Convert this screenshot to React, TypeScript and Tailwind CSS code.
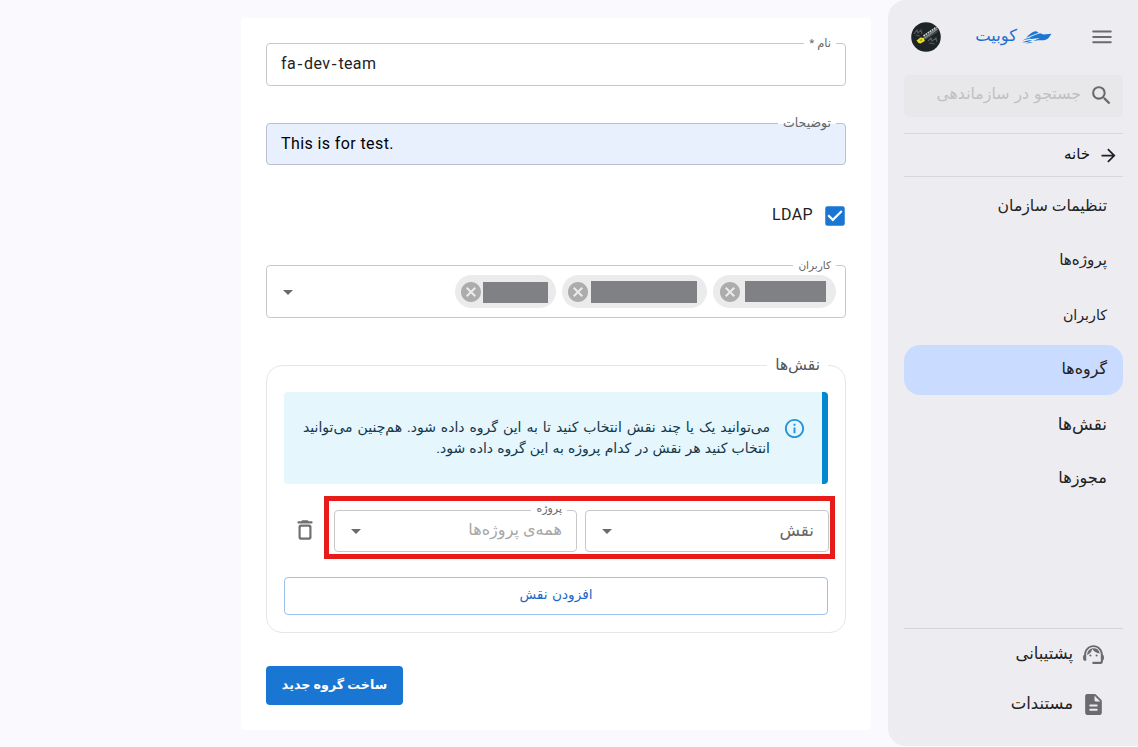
import type { ReactNode } from "react";
import {
  MdArrowDropDown,
  MdArrowForward,
  MdCancel,
  MdCheckBox,
  MdOutlineInfo,
  MdSearch,
  MdSupportAgent,
} from "react-icons/md";

const navItems = [
  { label: "تنظیمات سازمان", size: "text-[15.7px]" },
  { label: "پروژه‌ها", size: "text-[15.2px]" },
  { label: "کاربران", size: "text-[14.2px]" },
  { label: "گروه‌ها", size: "text-[15.9px]", active: true },
  { label: "نقش‌ها", size: "text-[17px]" },
  { label: "مجوزها", size: "text-[16.2px]" },
];

const chips = [
  { chip: "w-[123px] pr-[10px]", bar: "w-[81px] h-[21px]", gap: "gap-[3px]" },
  { chip: "w-[145px] pr-[10px]", bar: "w-[106px] h-[22px]", gap: "gap-px" },
  { chip: "w-[101px] pr-[8px]", bar: "w-[65px] h-[21px] mt-0.5", gap: "gap-0" },
];

function Logo() {
  return (
    <svg viewBox="0 0 30 14" className="h-[14px] w-[30px] fill-[#1976d2]">
      <path d="M4.300 7.800C6 5.500 8 3.700 10.500 2.200 12.500 1 14.500.9 15.700 1.900L16.500 2.700 10 5.200z" />
      <path d="M7.300 7.600 13 5l5-1.700 3.500 1.100 8-.6-3 4.200c-1.500 1.700-3.700 2.300-6.500 2.300-3.500-.1-5.500 0-9.500 1l7.500-3.400L9 9z" />
      <path d="M.5 10.800C2.200 9 4.500 8.300 7.300 7.900l1.500.9C5.500 9 3 9.700.5 10.800z" />
      <path d="M.3 12.500c3-1.700 6-2.500 10-2.600-2.500 1.600-5 2.400-10 2.600z" />
      <path d="M3.500 13.300c2.500-.9 4.500-1.400 7.500-1.400-2.300 1-4.500 1.500-7.500 1.400z" />
    </svg>
  );
}

function Avatar() {
  return (
    <svg viewBox="0 0 30 30" className="size-[30px]">
      <defs>
        <clipPath id="avatar-clip">
          <circle cx="15" cy="15" r="14.800" />
        </clipPath>
      </defs>
      <g clipPath="url(#avatar-clip)">
        <rect width="30" height="30" fill="#1d2427" />
        <path d="m12.500 15.500 13-9.500 1.500 1.800L14 17z" fill="#7b8082" />
        <path d="m12.500 14 13-8.800" stroke="#d3d5d6" strokeWidth="1.600" strokeDasharray="1.800 .7" />
        <path d="m14.500 17 12-7.500" stroke="#585e61" strokeWidth=".9" />
        <path d="m5.500 18.500 4-3 3.500.5.800 3-4.300 2.500-2-.5z" fill="#e6dd20" />
        <path d="m8.500 18.500 2-1.300.5 1.300z" fill="#625f1c" />
        <path
          d="m3 12 3-4 1 3 3-3 1 4M5 13l4 1M17 19l3-3 1 3 4-3 1 4M18 21l6 1"
          fill="none"
          stroke="#5c5655"
          strokeWidth="1.100"
        />
      </g>
    </svg>
  );
}

function MenuIcon() {
  return (
    <svg viewBox="0 0 24 24" className="size-6 text-[#6b6b6e]">
      <path
        d="M3.200 6.500h17.600M3.200 12h17.600M3.200 17.300h17.600"
        stroke="currentColor"
        strokeWidth="1.900"
        strokeLinecap="round"
      />
    </svg>
  );
}

function DocumentIcon() {
  return (
    <svg viewBox="0 0 24 24" className="size-[25px] fill-[#6b6b6e]">
      <path d="M14.590 2.590c-.38-.38-.89-.59-1.420-.59H6c-1.100 0-2 .9-2 2v16c0 1.100.89 2 1.990 2H18c1.100 0 2-.9 2-2V8.830c0-.53-.21-1.040-.59-1.410l-4.820-4.830zM15 18H9c-.55 0-1-.45-1-1s.45-1 1-1h6c.55 0 1 .45 1 1s-.45 1-1 1zm0-4H9c-.55 0-1-.45-1-1s.45-1 1-1h6c.55 0 1 .45 1 1s-.45 1-1 1zm-2-6V3.500L18.500 9H14c-.55 0-1-.45-1-1z" />
    </svg>
  );
}

function TrashIcon() {
  return (
    <svg viewBox="0 0 24 24" className="mt-1 mr-[6px] size-[26px] fill-[#707070]">
      <path d="M6 19c0 1.100.9 2 2 2h8c1.100 0 2-.9 2-2V9c0-1.100-.9-2-2-2H8c-1.100 0-2 .9-2 2v10zM9 9h6c.55 0 1 .45 1 1v8c0 .55-.45 1-1 1H9c-.55 0-1-.45-1-1v-8c0-.55.45-1 1-1zm6.500-5l-.71-.71c-.18-.18-.44-.29-.7-.29H9.910c-.26 0-.52.110-.7.290L8.500 4H6c-.55 0-1 .45-1 1s.45 1 1 1h12c.55 0 1-.45 1-1s-.45-1-1-1h-2.500z" />
    </svg>
  );
}

function OutlinedField({
  label,
  labelClass,
  className,
  children,
}: {
  label?: string;
  labelClass?: string;
  className: string;
  children: ReactNode;
}) {
  return (
    <div className={`relative flex items-center rounded-[4px] border border-[#c8c8c8] ${className}`}>
      {label && (
        <span
          className={`absolute -top-px right-[9px] flex h-px items-center bg-white px-[5px] whitespace-nowrap text-[#666] ${labelClass}`}
        >
          {label}
        </span>
      )}
      {children}
    </div>
  );
}

function Sidebar() {
  return (
    <aside className="flex h-[746px] w-[250px] shrink-0 flex-col rounded-l-[18px] bg-[#edecf1] pr-[15px] pl-4 text-[#222]">
      <header className="flex h-[75px] items-center pr-[9px] pb-0.5 pl-[7px]">
        <MenuIcon />
        <div className="mr-[38px] flex items-center gap-[5px]">
          <Logo />
          <span className="pb-0.5 text-[16.400px] leading-6 font-medium text-[#1b6fd0]">کوبیت</span>
        </div>
        <div className="mr-auto">
          <Avatar />
        </div>
      </header>

      <div className="flex h-[42px] items-center gap-[8px] rounded-[5px] bg-[#e8e8ea] pr-[9px] pb-0.5">
        <MdSearch className="size-[25px] text-[#69696b]" />
        <span className="pb-0.5 text-[15.800px] leading-6 text-[#c0c0c2] [word-spacing:1px]">جستجو در سازماندهی</span>
      </div>

      <div className="mt-4 flex h-[44px] items-center gap-[8px] border-y border-[#d8d7dc] pr-1">
        <MdArrowForward className="size-[21px] text-[#222]" />
        <span className="pb-0.5 text-[15px] leading-6 text-[#111]">خانه</span>
      </div>

      <nav className="mt-1 flex flex-col gap-[4.600px]">
        {navItems.map((item) => (
          <a
            key={item.label}
            className={`flex h-[50px] items-center rounded-2xl pr-4 pb-px leading-6 ${item.size} ${item.active ? "bg-[#c9dbff]" : ""}`}
          >
            {item.label}
          </a>
        ))}
      </nav>

      <footer className="mt-auto mb-[17px] border-t border-[#d4d3d8]">
        <a className="flex h-[50px] items-center gap-[8px] pr-[17px] text-[16.500px] leading-6">
          <MdSupportAgent className="size-[25px] text-[#6b6b6e]" />
          پشتیبانی
        </a>
        <a className="flex h-[50px] items-center gap-[8px] pr-[17px] text-[16.500px] leading-6">
          <DocumentIcon />
          مستندات
        </a>
      </footer>
    </aside>
  );
}

function RolesSection() {
  return (
    <section className="relative mt-[47px] h-[268px] rounded-2xl border border-[#e6e6e6] px-[17px] pt-[26px]">
      <h2 className="absolute -top-px right-[17px] flex h-px items-center bg-white px-2 text-[15.500px] text-[#555]">
        نقش‌ها
      </h2>

      <div className="flex h-[92px] rounded-[4px] border-r-[6px] border-[#0288d1] bg-[#e5f6fd] pt-[25px] pr-[16px]">
        <MdOutlineInfo className="size-[23px] shrink-0 text-[#2196d8]" />
        <p className="mr-[13px] text-[14px] leading-[21px] whitespace-nowrap text-[#14384c]">
          <span className="block [word-spacing:1.5px]">
            می‌توانید یک یا چند نقش انتخاب کنید تا به این گروه داده شود. هم‌چنین می‌توانید
          </span>
          <span className="block [word-spacing:0.7px]">انتخاب کنید هر نقش در کدام پروژه به این گروه داده شود.</span>
        </p>
      </div>

      <div className="mt-3 -mr-[7px] flex items-center">
        <div className="flex h-[63px] w-[511px] items-center gap-2 border-[5px] border-[#e81b1b] pt-[6px] pr-px">
          <OutlinedField className="h-[42px] w-[244px] justify-between pr-[14px] pl-[9px]">
            <span className="pb-0.5 text-[16.800px] leading-6 text-[#666]">نقش</span>
            <MdArrowDropDown className="size-6 text-[#6b6b6b]" />
          </OutlinedField>
          <OutlinedField
            label="پروژه"
            labelClass="text-[11px] pb-1"
            className="h-[42px] w-[243px] justify-between pr-[14px] pl-[9px]"
          >
            <span className="pb-0.5 text-[16.100px] leading-6 text-[#a8a8a8]">همه‌ی پروژه‌ها</span>
            <MdArrowDropDown className="size-6 text-[#6b6b6b]" />
          </OutlinedField>
        </div>
        <TrashIcon />
      </div>

      <button className="mt-[18px] flex h-[38px] w-full items-center justify-center rounded-[4px] border border-[#9cc3ec] pb-1 text-[13.700px] font-medium text-[#1d67c9] [word-spacing:1px]">
        افزودن نقش
      </button>
    </section>
  );
}

export default function App() {
  return (
    <div
      dir="rtl"
      className="flex h-[747px] w-[1138px] items-start overflow-hidden bg-[#faf9fe] font-[Roboto,'DejaVu_Sans',sans-serif]"
    >
      <Sidebar />

      <main className="mt-[18px] mr-[17px] flex h-[712px] w-[630px] flex-col rounded-[4px] bg-white px-[25px] pt-[25px]">
        <OutlinedField label="نام *" labelClass="text-[11.500px]" className="h-[43px] justify-end px-[14px]">
          <span dir="ltr" className="pb-0.5 text-base tracking-[0.35px] text-[#222]">
            fa<span className="mx-px font-['DejaVu_Sans']">-</span>dev
            <span className="mx-px font-['DejaVu_Sans']">-</span>team
          </span>
        </OutlinedField>

        <OutlinedField
          label="توضیحات"
          labelClass="text-[12.500px]"
          className="mt-[37px] h-[42px] justify-end border-[#b9c1d0]! bg-[#e8f0fe] px-[14px]"
        >
          <span dir="ltr" className="text-base tracking-[0.4px] text-black">
            This is for test.
          </span>
        </OutlinedField>

        <label className="mt-[38px] -mr-[2px] flex h-[26px] items-center gap-[9px]">
          <MdCheckBox className="size-[26px] text-[#1976d2]" />
          <span className="pb-0.5 text-base tracking-[0.35px] text-[#222]">LDAP</span>
        </label>

        <OutlinedField
          label="کاربران"
          labelClass="text-[10.500px]"
          className="mt-9 h-[53px] justify-between pr-[9px] pl-[9px]"
        >
          <div className="flex gap-[6px]">
            {chips.map((c) => (
              <span
                key={c.chip}
                className={`flex h-[33px] items-center rounded-full bg-[#ebebeb] ${c.chip} ${c.gap}`}
              >
                <span className={`bg-[#808184] ${c.bar}`} />
                <MdCancel className="size-6 text-[#acacac]" />
              </span>
            ))}
          </div>
          <MdArrowDropDown className="size-6 text-[#6b6b6b]" />
        </OutlinedField>

        <RolesSection />

        <button className="mt-[33px] mr-auto flex h-[39px] w-[137px] items-center justify-center rounded-[4px] bg-[#1976d2] pb-0.5 text-[12.700px] font-bold text-white">
          ساخت گروه جدید
        </button>
      </main>
    </div>
  );
}
